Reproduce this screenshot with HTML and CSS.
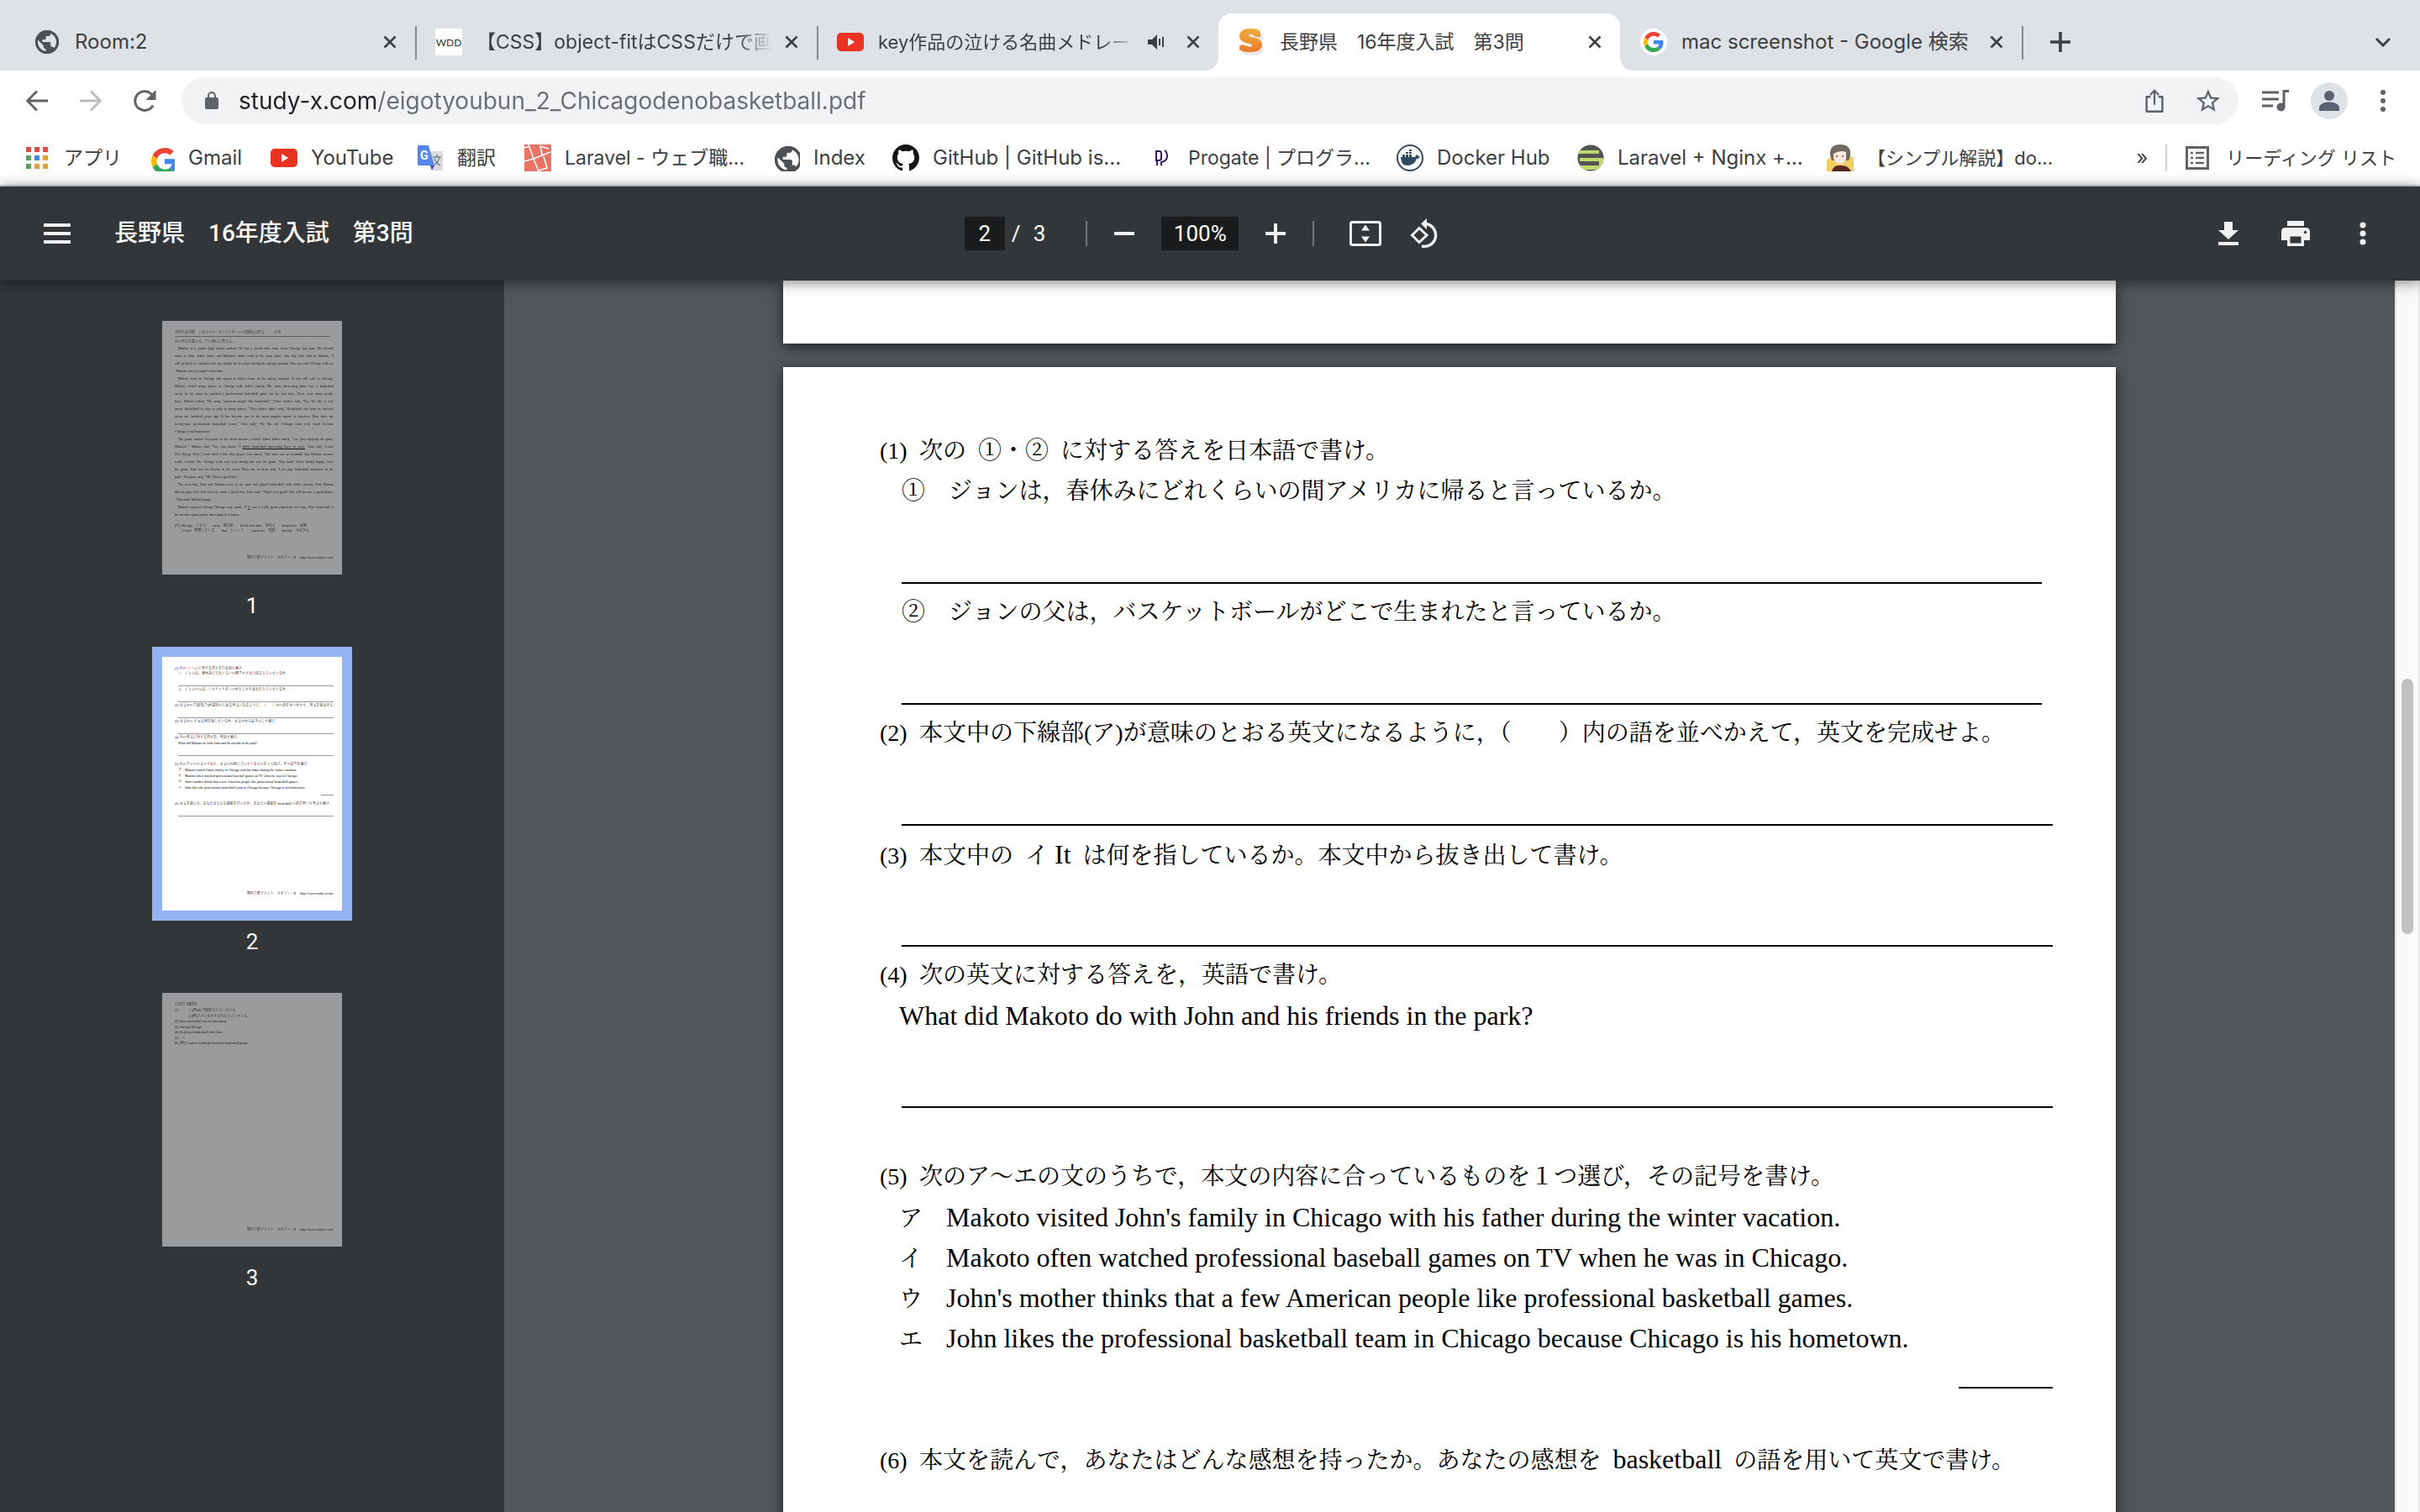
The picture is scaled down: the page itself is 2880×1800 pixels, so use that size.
FILE: index.html
```html
<!DOCTYPE html>
<html lang="ja">
<head>
<meta charset="utf-8">
<title>長野県　16年度入試　第3問</title>
<link rel="stylesheet" href="styles.css">
</head>
<body>
<svg class="defs" aria-hidden="true">
  <symbol id="i-globe" viewBox="2 2 20 20"><path d="M12 2C6.480 2 2 6.480 2 12s4.480 10 10 10 10-4.480 10-10S17.520 2 12 2zm-1 17.930c-3.950-.490-7-3.850-7-7.930 0-.620.080-1.210.210-1.790L9 15v1c0 1.100.900 2 2 2v1.930zm6.900-2.540c-.260-.810-1-1.390-1.900-1.390h-1v-3c0-.550-.450-1-1-1H8v-2h2c.550 0 1-.450 1-1V7h2c1.100 0 2-.900 2-2v-.410c2.930 1.190 5 4.060 5 7.410 0 2.080-.800 3.970-2.100 5.390z" fill="#4d5156"/><circle cx="12" cy="12" r="9" fill="none" stroke="#4d5156" stroke-width="2"/></symbol>
  <symbol id="i-close" viewBox="0 0 16 16"><path d="M1.500 1.500l13 13M14.500 1.500l-13 13" stroke="#3c4043" stroke-width="2.600" fill="none"/></symbol>
  <symbol id="i-youtube" viewBox="0 0 32 32"><rect y="5" width="32" height="22" rx="5" fill="#ea3323"/><path d="M13 11l8 5-8 5z" fill="#fff"/></symbol>
  <symbol id="i-google" viewBox="0 0 48 48"><path fill="#ea4335" d="M24 9.500c3.540 0 6.710 1.220 9.210 3.600l6.850-6.850C35.900 2.380 30.470 0 24 0 14.620 0 6.510 5.380 2.560 13.220l7.980 6.190C12.430 13.720 17.740 9.500 24 9.500z"/><path fill="#4285f4" d="M46.980 24.550c0-1.570-.150-3.090-.380-4.550H24v9.020h12.940c-.580 2.960-2.260 5.480-4.780 7.180l7.730 6c4.510-4.180 7.090-10.360 7.090-17.650z"/><path fill="#fbbc05" d="M10.530 28.590c-.480-1.450-.760-2.990-.760-4.590s.270-3.140.760-4.590l-7.980-6.190C.920 16.460 0 20.120 0 24c0 3.880.920 7.540 2.560 10.780l7.970-6.190z"/><path fill="#34a853" d="M24 48c6.480 0 11.930-2.130 15.890-5.810l-7.730-6c-2.150 1.450-4.920 2.300-8.160 2.300-6.260 0-11.570-4.220-13.470-9.910l-7.980 6.190C6.510 42.620 14.620 48 24 48z"/></symbol>
</svg>

<header class="browser">
  <div class="tabs" role="tablist">
    <div class="tab" role="tab">
      <svg class="fav globe"><use href="#i-globe"/></svg>
      <span class="tab-title">Room:2</span>
      <button class="close" aria-label="閉じる"><svg><use href="#i-close"/></svg></button>
    </div>
    <div class="tab split" role="tab">
      <svg class="fav" viewBox="0 0 32 32"><rect width="32" height="32" fill="#fff"/><text x="16" y="21" text-anchor="middle" font-family="Lato, sans-serif" font-size="12" fill="#333">WDD</text></svg>
      <span class="tab-title ja">【CSS】object-fitはCSSだけで画</span>
      <button class="close" aria-label="閉じる"><svg><use href="#i-close"/></svg></button>
    </div>
    <div class="tab split" role="tab">
      <svg class="fav"><use href="#i-youtube"/></svg>
      <span class="tab-title ja-small">key作品の泣ける名曲メドレー</span>
      <button class="audio" aria-label="ミュート"><svg viewBox="0 0 20 18"><path d="M0 6h5l6-6v18l-6-6H0z" fill="#3c4043"/><path d="M14 5v8M18 3v12" stroke="#3c4043" stroke-width="2"/></svg></button>
      <button class="close" aria-label="閉じる"><svg><use href="#i-close"/></svg></button>
    </div>
    <div class="tab active" role="tab" aria-selected="true">
      <svg class="fav" viewBox="0 0 32 32"><defs><linearGradient id="sg" x2="0" y2="1"><stop offset="0" stop-color="#f2ab3c"/><stop offset="1" stop-color="#ec7a2b"/></linearGradient></defs><path d="M27 11v-4q-2-5-11-5Q3 2 3 10q0 6 8 8 7 1 7 3 0 3-5 1l-8-2-3 2v5q3 3 12 3 14 0 14-9 0-6-8-8-7-1-7-3 0-2 4-1l5 2z" transform="translate(2 2)" fill="#e8e8e8"/><path d="M26 10V4q-2-4-11-4Q1 0 1 9q0 6 8 8 7 1 7 3 0 3-5 1l-7-2-3 2v4q3 3 12 3 15 0 15-9 0-6-8-8-8-1-8-3 0-2 4-1l5 3z" fill="url(#sg)"/></svg>
      <span class="tab-title ja">長野県　16年度入試　第3問</span>
      <button class="close" aria-label="閉じる"><svg><use href="#i-close"/></svg></button>
    </div>
    <div class="tab" role="tab">
      <svg class="fav" viewBox="0 0 32 32"><circle cx="16" cy="16" r="16" fill="#fff"/><svg x="4" y="4" width="24" height="24"><use href="#i-google"/></svg></svg>
      <span class="tab-title">mac screenshot - Google 検索</span>
      <button class="close" aria-label="閉じる"><svg><use href="#i-close"/></svg></button>
    </div>
    <button class="new-tab split" aria-label="新しいタブ"><svg viewBox="0 0 24 24"><path d="M12 0v24M0 12h24" stroke="#3c4043" stroke-width="3.600"/></svg></button>
    <button class="tab-menu" aria-label="タブを検索"><svg viewBox="0 0 20 12"><path d="M2 2l8 8 8-8" fill="none" stroke="#3c4043" stroke-width="3"/></svg></button>
  </div>

  <div class="toolbar">
    <button class="nav" aria-label="戻る"><svg viewBox="0 0 26 26"><path d="M26 13H2M13 1.500L1.700 13 13 24.500" fill="none" stroke="#5f6368" stroke-width="2.800"/></svg></button>
    <button class="nav" aria-label="進む"><svg viewBox="0 0 26 26"><path d="M0 13h24M13 1.500L24.300 13 13 24.500" fill="none" stroke="#babcbe" stroke-width="2.800"/></svg></button>
    <button class="nav" aria-label="再読み込み"><svg viewBox="0 0 28 26"><path d="M24 18.500A11.300 11.300 0 1 1 22.500 5.500L25 8.500" fill="none" stroke="#5f6368" stroke-width="3"/><path d="M27.500 0v12h-12z" fill="#5f6368"/></svg></button>
    <div class="omnibox">
      <svg class="lock" viewBox="0 0 16 22"><rect y="7" width="16" height="14" rx="2" fill="#5f6368"/><path d="M4 8V5a4 4 0 0 1 8 0v3" fill="none" stroke="#5f6368" stroke-width="2"/></svg>
      <input class="url" type="text" aria-label="アドレス" value="study-x.com/eigotyoubun_2_Chicagodenobasketball.pdf">
      <button class="act" aria-label="共有"><svg viewBox="0 0 28 32"><path d="M9 11H4v18.500h20V11h-5" fill="none" stroke="#5f6368" stroke-width="2.600" stroke-linejoin="round"/><path d="M14 21V3M8.500 8.500L14 3l5.500 5.500" fill="none" stroke="#5f6368" stroke-width="2.400"/></svg></button>
      <button class="act" aria-label="ブックマーク"><svg viewBox="0 0 24 24"><path d="M22 9.240l-7.190-.620L12 2 9.190 8.630 2 9.240l5.460 4.730L5.820 21 12 17.270 18.180 21l-1.630-7.030L22 9.240zM12 15.400l-3.760 2.270 1-4.280-3.320-2.880 4.380-.380L12 6.100l1.710 4.040 4.380.380-3.320 2.880 1 4.280L12 15.400z" transform="translate(-2.500 -2.200) scale(1.200)" fill="#5f6368"/></svg></button>
    </div>
    <button class="ext" aria-label="メディア"><svg viewBox="0 0 32 26"><path d="M0 3h20M0 11h20M0 19h13" stroke="#5f6368" stroke-width="3"/><path d="M32 1.500h-6V21" fill="none" stroke="#5f6368" stroke-width="3"/><circle cx="22.500" cy="20.500" r="5" fill="#5f6368"/></svg></button>
    <button class="ext" aria-label="プロフィール"><svg class="avatar" viewBox="0 0 44 44"><circle cx="22" cy="22" r="22" fill="#dee1e6"/><circle cx="22" cy="16" r="6" fill="#5a6172"/><path d="M10 34v-3c0-5 5-7.500 12-7.500S34 26 34 31v3z" fill="#5a6172"/></svg></button>
    <button class="ext" aria-label="メニュー"><svg class="dots" viewBox="0 0 6 26"><g fill="#5f6368"><circle cx="3" cy="3" r="3"/><circle cx="3" cy="13" r="3"/><circle cx="3" cy="23" r="3"/></g></svg></button>
  </div>

  <nav class="bookmarks">
    <div class="bm-list">
      <a class="ja" href="#"><svg viewBox="0 0 32 32"><g fill="#e04a3f"><path d="M3 3h6v6H3zM13 3h6v6h-6zM23 3h6v6h-6z"/></g><path d="M3 13h6v6H3zM3 23h6v6H3z" fill="#58a05c"/><path d="M13 13h6v6h-6z" fill="#4a86e8"/><path d="M23 13h6v6h-6zM13 23h6v6h-6zM23 23h6v6h-6z" fill="#e0a23c"/></svg>アプリ</a>
      <a href="#"><svg viewBox="0 0 32 32"><svg x="4" y="4" width="24" height="24"><use href="#i-google"/></svg></svg>Gmail</a>
      <a href="#"><svg><use href="#i-youtube"/></svg>YouTube</a>
      <a class="ja" href="#"><svg viewBox="0 0 32 32"><path d="M12 8h18q1 0 1 1v21q0 1-1 1H19z" fill="#d9dbde"/><path d="M2 1h12l7 24H2q-1 0-1-1V2q0-1 1-1z" fill="#5486ec"/><path d="M16 25h5l-3 6z" fill="#3a4fb8"/><text x="4" y="18" font-family="Roboto, sans-serif" font-weight="700" font-size="14" fill="#fff">G</text><path d="M19 15h10M24 12v3M27 15q-1 6-7 10M21 17q2 5 7 8" stroke="#6f8790" stroke-width="1.500" fill="none"/></svg>翻訳</a>
      <a class="ja" href="#"><svg viewBox="0 0 32 32"><path d="M0 0h32v32H0z" fill="#e97465"/><path d="M5 0l6 17 20-8M11 17l6 15M0 20l11-3M0 4l6-2M17 31l10-3-4-14M21 12l-2-10 10 3" fill="none" stroke="#fff" stroke-width="1.500"/></svg>Laravel - ウェブ職...</a>
      <a href="#"><svg viewBox="0 0 32 32"><svg x="2" y="2" width="28" height="28"><use href="#i-globe"/></svg></svg>Index</a>
      <a href="#"><svg viewBox="0 0 16 16"><path d="M8 0C3.580 0 0 3.580 0 8c0 3.540 2.290 6.530 5.470 7.590.400.070.550-.170.550-.380 0-.190-.010-.820-.010-1.490-2.010.370-2.530-.490-2.690-.940-.090-.230-.480-.940-.820-1.130-.280-.150-.680-.520-.010-.530.630-.010 1.080.580 1.230.820.720 1.210 1.870.870 2.330.660.070-.520.280-.870.510-1.070-1.780-.200-3.640-.890-3.640-3.950 0-.870.310-1.590.820-2.150-.080-.200-.360-1.020.080-2.120 0 0 .670-.210 2.200.820.640-.180 1.320-.270 2-.270s1.360.090 2 .270c1.530-1.040 2.200-.820 2.200-.820.440 1.100.160 1.920.080 2.120.510.560.820 1.270.820 2.150 0 3.070-1.870 3.750-3.650 3.950.290.250.540.730.540 1.480 0 1.070-.010 1.930-.010 2.200 0 .210.150.460.550.380A8.010 8.010 0 0 0 16 8c0-4.420-3.580-8-8-8z" fill="#161514"/></svg>GitHub | GitHub is...</a>
      <a class="ja" href="#"><svg viewBox="0 0 32 32"><path d="M10 8h4q2 0 2 3v5q0 3-3 3h-3zM11 19v6M20 7q3 2 3 7 0 6-7 7v4" fill="none" stroke="#3b1a5c" stroke-width="2"/></svg>Progate | プログラ...</a>
      <a href="#"><svg viewBox="0 0 32 32"><circle cx="16" cy="16" r="15" fill="#fff" stroke="#33495c" stroke-width="2"/><path d="M5 15h17q1-3 3-3 0 2 3 3-1 2-4 2-3 8-11 8-8 0-8-10z" fill="#2f4a63"/><path d="M7 12h3v3H7zM11 12h3v3h-3zM15 12h3v3h-3zM11 9h3v2h-3zM15 9h3v2h-3zM15 6h3v2h-3z" fill="#2f4a63"/></svg>Docker Hub</a>
      <a href="#"><svg viewBox="0 0 32 32"><defs><clipPath id="rc"><circle cx="16" cy="16" r="15.500"/></clipPath></defs><g clip-path="url(#rc)"><path d="M0 0h32v32H0z" fill="#535353"/><path d="M0 7h26v4H0zM3 16h29v4H3zM0 25h32v5H0z" fill="#bcd96f"/><path d="M26 20h6v6h-6z" fill="#bcd96f"/></g></svg>Laravel + Nginx +...</a>
      <a class="ja-small" href="#"><svg viewBox="0 0 32 32"><path d="M0 0h32v32H0z" fill="#fdfdfb"/><path d="M0 18q8-6 32-3v17H0z" fill="#f3cf62"/><path d="M4 13Q3 0 16 0t12 12q0 4-2 7H6z" fill="#756a60"/><path d="M8 11q8-5 15-2v8q-2 6-7 6t-8-6z" fill="#fbe9dd"/><path d="M6 32q2-8 10-7 9-1 13 7z" fill="#5b2523"/><path d="M11 14h2M18 14h2" stroke="#a07860" stroke-width="2"/></svg>【シンプル解説】do...</a>
    </div>
    <button class="more" aria-label="他のブックマーク">»</button>
    <button class="reading"><svg viewBox="0 0 28 28"><rect x="1.500" y="1.500" width="25" height="25" fill="none" stroke="#5f6368" stroke-width="3"/><path d="M6 8h3M12 8h10M6 14h3M12 14h10M6 20h3M12 20h10" stroke="#5f6368" stroke-width="2.400"/></svg>リーディング リスト</button>
  </nav>
</header>

<div class="pdf-bar">
  <div class="bar-left">
    <button class="menu" aria-label="メニュー"><svg width="32" height="24" viewBox="0 0 32 24"><path d="M0 2h32M0 12h32M0 22h32" stroke="#f1f1f1" stroke-width="4"/></svg></button>
    <h1>長野県　16年度入試　第3問</h1>
  </div>
  <div class="bar-mid">
    <input class="page-no" aria-label="ページ番号" value="2"><span class="slash">/</span><span>3</span>
    <span class="vr"></span>
    <button aria-label="縮小"><svg width="24" height="24" viewBox="0 0 24 24"><path d="M0 12h24" stroke="#f1f1f1" stroke-width="4"/></svg></button>
    <input class="zoom" aria-label="ズーム" value="100%">
    <button aria-label="拡大"><svg width="24" height="24" viewBox="0 0 24 24"><path d="M0 12h24M12 0v24" stroke="#f1f1f1" stroke-width="4"/></svg></button>
    <span class="vr second"></span>
    <button aria-label="ページに合わせる"><svg width="38" height="30" viewBox="0 0 38 30"><rect x="1.500" y="1.500" width="35" height="27" rx="2" fill="none" stroke="#f1f1f1" stroke-width="3"/><path d="M19 4.500l5 7H14zM19 25.500l5-7H14z" fill="#f1f1f1"/></svg></button>
    <button class="rotate" aria-label="回転"><svg width="36" height="36" viewBox="0 0 36 36"><path d="M11 11.500l9 8.500-9 8.500L2.500 20z" fill="none" stroke="#f1f1f1" stroke-width="3"/><path d="M19 6.500a13.500 13.500 0 1 1-5 26.500" fill="none" stroke="#f1f1f1" stroke-width="3.400"/><path d="M20 0v13l-7-6.500z" fill="#f1f1f1"/></svg></button>
  </div>
  <div class="bar-right">
    <button aria-label="ダウンロード"><svg width="24" height="28" viewBox="0 0 24 28"><path d="M7 0h10v10h7L12 21 0 10h7zM0 24h24v4H0z" fill="#f1f1f1"/></svg></button>
    <button aria-label="印刷"><svg width="34" height="30" viewBox="0 0 34 30"><path d="M7 0h20v6H7zM5 8h24q5 0 5 5v10h-7v7H7v-7H0V13q0-5 5-5z" fill="#f1f1f1"/><path d="M10.500 18.500h13v8h-13z" fill="#323639"/><circle cx="28.500" cy="13.500" r="1.700" fill="#323639"/></svg></button>
    <button aria-label="その他"><svg width="8" height="28" viewBox="0 0 8 28"><g fill="#f1f1f1"><circle cx="4" cy="4" r="3.500"/><circle cx="4" cy="14" r="3.500"/><circle cx="4" cy="24" r="3.500"/></g></svg></button>
  </div>
</div>

<div class="viewer">
  <aside class="thumbs">
    <figure class="thumb">
      <div class="sheet">
        <p>高校入試対策　シカゴでのバスケットボールの経験(広島県)　　　氏名</p>
        <div class="hair"></div>
        <p>次の英文を読んで，下の問いに答えよ。</p>
        <div class="story">
          <p class="in">Makoto is a junior high school student. He has a friend who came from Chicago last year. His friend's</p>
          <p>name is John. John's father and Makoto's father work at the same place. One day John said to Makoto, "I</p>
          <p>will go back to America with my family for ten days during the spring vacation. You can visit Chicago with us.</p>
          <p class="end">"Makoto was very glad to hear that.</p>
          <p class="in">Makoto went to Chicago and stayed at John's house in the spring vacation. It was still cold in Chicago.</p>
          <p>Makoto visited many places in Chicago with John's family. The most interesting place was a basketball</p>
          <p>arena. In the arena he watched a professional basketball game for the first time. There were many people</p>
          <p>there. Makoto asked, "Do many American people like basketball? "John's mother said, "Yes. We like it very</p>
          <p>much. Basketball is easy to play in many places. "Then John's father said, "Basketball was born in America</p>
          <p>about one hundred years ago. It has become one of the most popular sports in America. Now there are</p>
          <p>twenty-nine professional basketball teams." John said," We like the Chicago team very much because</p>
          <p class="end">Chicago is our hometown."</p>
          <p class="in">The game started. Everyone in the arena became excited. John's father asked, "Are you enjoying the game,</p>
          <p>Makoto? " Makoto said, "Yes, very much. "I <u>didn't (basketball interesting knew so was).</u> "John said, "Look!</p>
          <p>He's flying. Wow! Good shot! I like that player very much. "The shot was so beautiful that Makoto became</p>
          <p>really excited. The Chicago team was very strong and won the game. That made John's family happy. After</p>
          <p>the game, John met his friends in the arena. Then one of them said, "Let's play basketball tomorrow in the</p>
          <p class="end">park." Everyone said, "OK. That's a good idea."</p>
          <p class="in">The next day, John and Makoto went to the park and played basketball with John's friends. First Makoto</p>
          <p>did not play well. But when he made a good shot, John said, "That's very good! You will become a good player.</p>
          <p class="end">"That made Makoto happy.</p>
          <p class="in">Makoto enjoyed visiting Chicago very much. イ<u>It</u> was a really good experience for him. Now basketball is</p>
          <p class="end">his favorite sport, and he often plays it in Japan.</p>
        </div>
        <p>(注) Chicago　シカゴ　　arena　競技場　　for the first time　初めて　　hometown　故郷</p>
        <p class="note">excited　興奮している　　shot　シュート　　experience　経験　　favorite　大好きな</p>
        <p class="foot">無料学習プリント　スタディーX　 http://www.study-x.com/</p>
      </div>
      <figcaption>1</figcaption>
    </figure>
    <figure class="thumb current">
      <div class="sheet">
        <p>(1) 次の ①・② に対する答えを日本語で書け。</p>
        <p class="sub">①　ジョンは，春休みにどれくらいの間アメリカに帰ると言っているか。</p>
        <div class="line"></div>
        <p class="sub">②　ジョンの父は，バスケットボールがどこで生まれたと言っているか。</p>
        <div class="line"></div>
        <p>(2) 本文中の下線部(ア)が意味のとおる英文になるように，（　　）内の語を並べかえて，英文を完成せよ。</p>
        <div class="line"></div>
        <p>(3) 本文中の イ It は何を指しているか。本文中から抜き出して書け。</p>
        <div class="line"></div>
        <p>(4) 次の英文に対する答えを，英語で書け。</p>
        <p class="sub tall">What did Makoto do with John and his friends in the park?</p>
        <div class="line wide"></div>
        <p>(5) 次のア～エの文のうちで，本文の内容に合っているものを１つ選び，その記号を書け。</p>
        <p class="sub tall">ア　Makoto visited John's family in Chicago with his father during the winter vacation.</p>
        <p class="sub tall">イ　Makoto often watched professional baseball games on TV when he was in Chicago.</p>
        <p class="sub tall">ウ　John's mother thinks that a few American people like professional basketball games.</p>
        <p class="sub tall">エ　John likes the professional basketball team in Chicago because Chicago is his hometown.</p>
        <div class="line short"></div>
        <p>(6) 本文を読んで，あなたはどんな感想を持ったか。あなたの感想を basketball の語を用いて英文で書け。</p>
        <div class="line"></div>
        <p class="foot">無料学習プリント　スタディーX　 http://www.study-x.com/</p>
      </div>
      <figcaption>2</figcaption>
    </figure>
    <figure class="thumb">
      <div class="sheet">
        <p>広島県【解答】</p>
        <p class="tall">(1)　　　①(例)10 日間帰ると言っている。</p>
        <p class="tall">　　　　②(例)アメリカで生まれたと言っている。</p>
        <p>(2) knew basketball was so interesting</p>
        <p class="tall">(3) visiting Chicago</p>
        <p>(4) He played basketball with them.</p>
        <p class="tall">(5)　エ</p>
        <p>(6) (例) I want to watch professional basketball games.</p>
        <p class="foot">無料学習プリント　スタディーX　 http://www.study-x.com/</p>
      </div>
      <figcaption>3</figcaption>
    </figure>
  </aside>

  <main class="pages">
    <div class="page prev"></div>
    <article class="page doc">
      <p><span class="num">(1)</span>次の  ①・②  に対する答えを日本語で書け。</p>
      <p class="item"><span class="mark">①</span>ジョンは，春休みにどれくらいの間アメリカに帰ると言っているか。</p>
      <div class="answer inset"></div>
      <p class="item"><span class="mark">②</span>ジョンの父は，バスケットボールがどこで生まれたと言っているか。</p>
      <div class="answer inset"></div>
      <p><span class="num">(2)</span>本文中の下線部(ア)が意味のとおる英文になるように，（　　）内の語を並べかえて，英文を完成せよ。</p>
      <div class="answer"></div>
      <p><span class="num">(3)</span>本文中の  イ <span class="latin">It</span>  は何を指しているか。本文中から抜き出して書け。</p>
      <div class="answer"></div>
      <p><span class="num">(4)</span>次の英文に対する答えを，英語で書け。</p>
      <p class="item en">What did Makoto do with John and his friends in the park?</p>
      <div class="answer last"></div>
      <p><span class="num">(5)</span>次のア～エの文のうちで，本文の内容に合っているものを１つ選び，その記号を書け。</p>
      <p class="item en"><span class="mark">ア</span>Makoto visited John's family in Chicago with his father during the winter vacation.</p>
      <p class="item en"><span class="mark">イ</span>Makoto often watched professional baseball games on TV when he was in Chicago.</p>
      <p class="item en"><span class="mark">ウ</span>John's mother thinks that a few American people like professional basketball games.</p>
      <p class="item en"><span class="mark">エ</span>John likes the professional basketball team in Chicago because Chicago is his hometown.</p>
      <div class="answer tiny"></div>
      <p><span class="num">(6)</span>本文を読んで，あなたはどんな感想を持ったか。あなたの感想を  <span class="latin">basketball</span>  の語を用いて英文で書け。</p>
      <div class="answer"></div>
    </article>
  </main>
  <div class="scroll"><div class="scroll-thumb"></div></div>
</div>
</body>
</html>
```
FILE: styles.css
```css
* { box-sizing: border-box; }
html, body { height: 100%; margin: 0; }
body {
  display: flex;
  flex-direction: column;
  overflow: hidden;
  font-family: Inter, "Noto Sans CJK JP", sans-serif;
  font-size: 24px;
  line-height: 32px;
  color: #3c4043;
}
p, h1, figure { margin: 0; }
button {
  display: flex;
  align-items: center;
  justify-content: center;
  padding: 0;
  border: 0;
  background: none;
  font: inherit;
  color: inherit;
}
input { border: 0; outline: 0; padding: 0; font: inherit; }
svg { display: block; flex: none; }
.defs { position: absolute; width: 0; height: 0; }
.ja { font-size: 23px; }
.ja-small { font-size: 22px; }

/* Tab strip */
.browser { flex: none; background: #fff; border-bottom: 2px solid #d5d7da; }
.tabs {
  display: flex;
  height: 84px;
  padding: 16px 20px 0 16px;
  background: #dee1e6;
}
.tab {
  position: relative;
  display: flex;
  align-items: center;
  flex: 0 1 478px;
  min-width: 0;
  padding: 0 14px 0 24px;
}
.split { position: relative; }
.split::before {
  content: "";
  position: absolute;
  left: 0;
  top: 15px;
  width: 2px;
  height: 40px;
  background: #85888c;
}
.fav { width: 32px; height: 32px; margin-right: 17px; }
.globe { padding: 2px; }
.tab-title { flex: 1; min-width: 0; overflow: hidden; white-space: nowrap; }
.split .tab-title {
  -webkit-mask-image: linear-gradient(to left, transparent, #000 40px);
  mask-image: linear-gradient(to left, transparent, #000 40px);
}
.close { width: 32px; height: 32px; margin-left: 8px; }
.close svg { width: 16px; height: 16px; }
.audio { width: 20px; margin: 0 10px 0 16px; }
.audio svg { width: 20px; height: 18px; }
.active { background: #fff; border-radius: 16px 16px 0 0; }
.active::before, .active::after {
  content: "";
  position: absolute;
  bottom: 0;
  width: 16px;
  height: 16px;
}
.active::before { left: -16px; background: radial-gradient(circle at 0 0, transparent 16px, #fff 16px); }
.active::after { right: -16px; background: radial-gradient(circle at 100% 0, transparent 16px, #fff 16px); }
.new-tab { width: 92px; }
.new-tab svg { width: 24px; height: 24px; }
.tab-menu { width: 48px; margin-left: auto; }
.tab-menu svg { width: 20px; height: 12px; }

/* Address bar */
.toolbar { display: flex; align-items: center; height: 72px; padding: 0 12px; }
.nav { width: 64px; height: 56px; }
.nav svg { width: 28px; height: 26px; }
.omnibox {
  display: flex;
  align-items: center;
  flex: 1;
  height: 56px;
  margin: 0 12px;
  padding: 0 4px 0 28px;
  border-radius: 28px;
  background: #f1f3f4;
}
.lock { width: 16px; height: 22px; margin-right: 24px; }
.url {
  flex: 1;
  height: 56px;
  font-size: 28px;
  color: transparent;
  background: linear-gradient(to right, #202124 165px, #6b6e72 165px);
  -webkit-background-clip: text;
  background-clip: text;
}
.act { width: 64px; height: 56px; }
.act svg { width: 28px; height: 30px; }
.ext { width: 64px; height: 56px; }
.ext svg { width: 32px; height: 26px; }
.ext .avatar { width: 44px; height: 44px; }
.ext .dots { width: 6px; height: 26px; }

/* Bookmarks bar */
.bookmarks { display: flex; align-items: center; height: 64px; padding: 0 28px; }
.bm-list {
  display: grid;
  grid-template-columns: 148px 146px 174px 128px 296px 142px 304px 296px 215px 297px 300px;
  flex: 1;
}
.bm-list a {
  display: flex;
  align-items: center;
  gap: 16px;
  white-space: nowrap;
  color: inherit;
  text-decoration: none;
}
.bm-list svg { width: 32px; height: 32px; }
.more { width: 56px; }
.reading {
  height: 32px;
  gap: 20px;
  padding-left: 22px;
  border-left: 2px solid #cfd1d4;
  font-size: 22px;
  white-space: nowrap;
}
.reading svg { width: 28px; height: 28px; }

/* PDF toolbar */
.pdf-bar {
  position: relative;
  z-index: 1;
  display: grid;
  grid-template-columns: 1fr auto 1fr;
  align-items: center;
  flex: none;
  height: 112px;
  padding: 0 52px 0 34px;
  background: #323639;
  color: #fff;
  font-family: Roboto, "Noto Sans CJK JP", sans-serif;
  font-size: 26px;
  box-shadow: 0 2px 16px rgba(0, 0, 0, 0.5);
}
.bar-left { display: flex; align-items: center; gap: 34px; }
.bar-left h1 { font-size: 28px; font-weight: 500; white-space: nowrap; }
.menu { width: 68px; height: 64px; }
.bar-mid { display: flex; align-items: center; }
.page-no, .zoom { height: 40px; text-align: center; color: #fff; background: #191b1c; }
.page-no { width: 48px; }
.zoom { width: 92px; margin: 0 32px; }
.slash { width: 34px; padding-left: 8px; }
.vr { width: 2px; height: 30px; margin: 0 32px 0 48px; background: #70767a; }
.second { margin: 0 42px 0 32px; }
.rotate { margin-left: 34px; }
.bar-right { display: flex; align-items: center; justify-content: flex-end; gap: 48px; }
.bar-right button { width: 32px; height: 32px; }

/* Viewer */
.viewer { display: flex; flex: 1; min-height: 0; background: #525659; }
.thumbs {
  flex: none;
  width: 600px;
  padding-top: 36px;
  overflow: hidden;
  background: #323639;
}
.thumb { display: flex; flex-direction: column; align-items: center; height: 400px; }
.sheet {
  display: flex;
  flex-direction: column;
  flex: none;
  width: 214px;
  height: 302px;
  margin: 12px;
  padding: 11px 10px 17px 15px;
  background: #fff;
  color: #000;
  opacity: 0.5;
  font-family: "Liberation Serif", "Noto Serif CJK JP", "Noto Sans CJK JP", serif;
  font-size: 4px;
  line-height: 6px;
  white-space: nowrap;
}
.current .sheet { opacity: 1; outline: 12px solid #94b3f3; }
.thumb figcaption {
  font-family: Roboto, sans-serif;
  font-size: 26px;
  line-height: 50px;
  color: #fff;
}
.hair { height: 1px; margin: 1px 4px 3px 0; background: #888; }
.story { margin-bottom: 6px; line-height: 9px; }
.story p { text-align-last: justify; }
.story .in { padding-left: 4px; }
.story .end { text-align-last: left; }
.note { padding-left: 8px; }
.foot { margin-top: auto; text-align: right; }
.sub { padding-left: 4px; }
.tall { line-height: 7px; }
.line { height: 12px; margin: 0 0 1px 4px; border-bottom: 1px solid #999; }
.line.wide { margin-bottom: 7px; }
.line.short { width: 15px; height: 6px; margin: 0 0 7px auto; }

.pages {
  display: flex;
  flex-direction: column;
  gap: 28px;
  flex: 1;
  padding: 0 332px;
  overflow: hidden;
}
.page { background: #fff; box-shadow: 0 4px 14px rgba(0, 0, 0, 0.6); }
.prev { flex: none; height: 75px; }
.doc {
  flex: none;
  padding: 76px 75px 400px 115px;
  color: #000;
  font-family: "Liberation Serif", "Noto Serif CJK JP", "Noto Sans CJK JP", serif;
  font-size: 28px;
  line-height: 48px;
}
.doc p { height: 48px; white-space: pre; }
.latin { font-size: 32px; }
.num { display: inline-block; width: 47px; }
.item { padding-left: 26px; }
.mark { display: inline-block; width: 56px; font-size: 28px; }
.en { padding-left: 23px; font-size: 32px; }
.answer { height: 86px; margin: 0 0 10px 26px; border-bottom: 2px solid #000; }
.inset { margin-right: 13px; }
.last { margin-bottom: 58px; }
.tiny { width: 112px; height: 36px; margin: 0 0 60px auto; }

.scroll {
  flex: none;
  width: 30px;
  padding: 474px 6px 0;
  background: #fafafa;
  border: solid #e8e8e8;
  border-width: 0 2px;
}
.scroll-thumb { height: 304px; border-radius: 8px; background: #c1c1c1; }
```
